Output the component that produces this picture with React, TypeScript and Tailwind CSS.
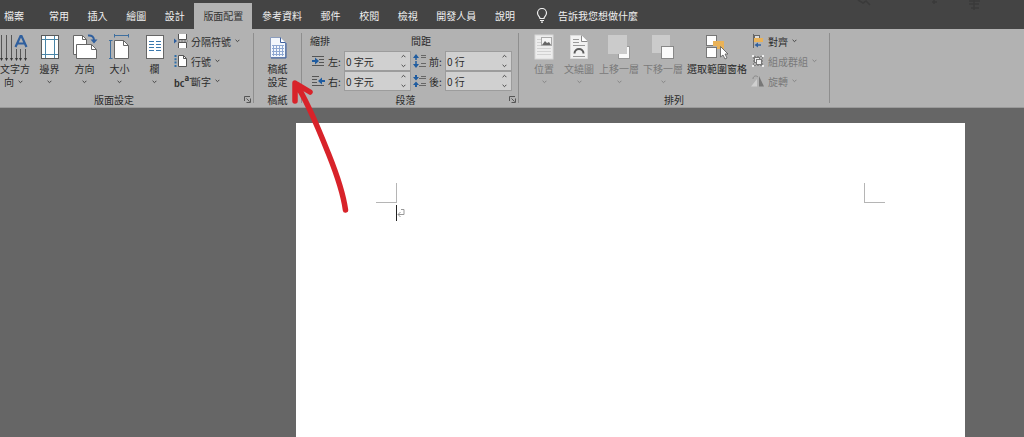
import type { ReactNode } from 'react';
import clsx from 'clsx';

const TABS = ['常用', '插入', '繪圖', '設計', '版面配置', '參考資料', '郵件', '校閱', '檢視', '開發人員', '說明'] as const;
const ACTIVE_TAB = '版面配置';

function Chevron({ className }: { className?: string }) {
  return (
    <svg className={clsx('shrink-0 opacity-80', className)} width="5" height="4" viewBox="0 0 5 4" fill="none" stroke="currentColor" aria-hidden="true">
      <path d="M0.6 0.8 2.5 2.7 4.4 0.8" />
    </svg>
  );
}

/* ---------- large icons ---------- */

function TextDirectionIcon() {
  return (
    <svg width="28" height="28" viewBox="0 0 28 28" aria-hidden="true">
      <g stroke="#555" fill="none">
        <path d="M1.500 1v25M6.500 1v25M11.500 1v25M16.500 15v11M20.500 15v11M25.500 15v11" />
      </g>
      <path d="M0 24h3l-1.500 3zM5 24h3l-1.500 3zM10 24h3l-1.500 3zM15 24h3l-1.500 3zM19 24h3l-1.500 3zM24 24h3l-1.500 3z" fill="#333" />
      <path d="M15.500 13 20.500 2h1l5 11M17.500 9.500h7" fill="none" stroke="#2f5f9e" strokeWidth="2.200" />
    </svg>
  );
}

function MarginsIcon() {
  return (
    <svg width="20" height="26" viewBox="0 0 20 26" aria-hidden="true">
      <rect x="1.500" y="1.500" width="17" height="23" fill="#fff" stroke="#5a5a5a" />
      <path d="M5.500 2v22M14.500 2v22M2 5.500h16M2 20.500h16" stroke="#4a86a8" fill="none" />
    </svg>
  );
}

function OrientationIcon() {
  return (
    <svg width="26" height="26" viewBox="0 0 26 26" aria-hidden="true">
      <path d="M1.500 1.500h9l4 4v15h-13z" fill="#fff" stroke="#666" />
      <path d="M10.500 1.500v4h4" fill="none" stroke="#666" />
      <path d="M4.500 10.500h15l5 5v9h-20z" fill="#fff" stroke="#666" />
      <path d="M19.500 10.500v5h5" fill="none" stroke="#666" />
      <path d="M16 1.500c4-.5 6 1.500 6 5" fill="none" stroke="#2f5f9e" strokeWidth="2" />
      <path d="M18.500 5.500h7L22 9.500z" fill="#2f5f9e" />
    </svg>
  );
}

function SizeIcon() {
  return (
    <svg width="22" height="26" viewBox="0 0 22 26" aria-hidden="true">
      <path d="M5.500 6.500h9l5 5v13h-14z" fill="#fff" stroke="#666" />
      <path d="M14.500 6.500v5h5" fill="none" stroke="#666" />
      <path d="M5 1.500h15M5.500 0v3.500M19.500 0v3.500M1.500 6v18M0 6.500h3.500M0 24.500h3.500" fill="none" stroke="#3f6f9f" />
    </svg>
  );
}

function ColumnsIcon() {
  return (
    <svg width="20" height="26" viewBox="0 0 20 26" aria-hidden="true">
      <rect x="1.500" y="1.500" width="17" height="23" fill="#fff" stroke="#666" />
      <path d="M4 7.500h5M4 10.500h5M4 13.500h5M4 16.500h5M11 7.500h5M11 10.500h5M11 13.500h5M11 16.500h5" stroke="#3a78ad" fill="none" />
    </svg>
  );
}

function ManuscriptIcon() {
  return (
    <svg width="18" height="24" viewBox="0 0 18 24" aria-hidden="true">
      <path d="M1.500 1.500h10l5 5v15h-15z" fill="#f3f7fc" stroke="#8c9dbd" />
      <path d="M11.500 1.500v5h5" fill="#fff" stroke="#3d5f9c" />
      <path d="M4.500 9v11M7.500 9v11M10.500 9v11M13.500 9v11M3 9.500h12M3 12.500h12M3 15.500h12M3 18.500h12" stroke="#8fa8d2" fill="none" />
      <path d="M2 22h15V7" fill="none" stroke="#3d5f9c" />
    </svg>
  );
}

function PositionIcon() {
  return (
    <svg width="20" height="26" viewBox="0 0 20 26" aria-hidden="true">
      <rect x="1" y="1" width="18" height="24" fill="#ededed" stroke="#d8d8d8" />
      <path d="M3 5.500h4M3 8.500h4M3 11.500h4M3 14.500h14M3 17.500h14M3 20.500h14" stroke="#d2d2d2" fill="none" />
      <rect x="7.500" y="3.500" width="10" height="8" fill="#f4f4f4" stroke="#aaa" />
      <path d="M8 11l3-4 2 2 2-1 2 3z" fill="#666" />
    </svg>
  );
}

function WrapTextIcon() {
  return (
    <svg width="20" height="26" viewBox="0 0 20 26" aria-hidden="true">
      <path d="M1.500 1.500h11l6 6v17h-17z" fill="#f2f2f2" stroke="#dcdcdc" />
      <path d="M12.500 1.500v6h6" fill="#fff" stroke="#8a8a8a" />
      <path d="M4 5.500h6M4 8.500h6M4 11.500h12M4 22.500h12" stroke="#9a9a9a" fill="none" />
      <path d="M5.500 19.500c0-6 9-6 9 0" fill="none" stroke="#5c5c5c" strokeWidth="2" />
    </svg>
  );
}

function BringForwardIcon() {
  return (
    <svg width="24" height="26" viewBox="0 0 24 26" aria-hidden="true">
      <rect x="11.500" y="12.500" width="11" height="12" fill="#fafafa" stroke="#999" />
      <rect x="1" y="1" width="19" height="19" fill="#cbcbcb" />
    </svg>
  );
}

function SendBackwardIcon() {
  return (
    <svg width="24" height="26" viewBox="0 0 24 26" aria-hidden="true">
      <rect x="1" y="1" width="18" height="18" fill="#cbcbcb" />
      <rect x="10.500" y="12.500" width="12" height="12" fill="#fafafa" stroke="#888" />
    </svg>
  );
}

function SelectionPaneIcon() {
  return (
    <svg width="24" height="26" viewBox="0 0 24 26" aria-hidden="true">
      <rect x="1.500" y="1.500" width="10" height="10" fill="#fff" stroke="#777" />
      <rect x="1.500" y="13.500" width="10" height="10" fill="#fff" stroke="#777" />
      <path d="M8 7h11v8h-7v-3H8z" fill="#e9b258" />
      <path d="M15.500 12.500v10.500l2.500-2 2 4 2-1-2-4h3z" fill="#fff" stroke="#555" strokeWidth="0.800" />
    </svg>
  );
}

/* ---------- small icons ---------- */

function BreaksIcon() {
  return (
    <svg width="14" height="14" viewBox="0 0 14 14" aria-hidden="true">
      <path d="M4.500 0v5.500h8V0M4.500 14V8.500h8V14" fill="#fff" stroke="#555" />
      <path d="M4 7h10" stroke="#777" strokeDasharray="2 1" />
      <path d="M0 4.500 3 7 0 9.500z" fill="#2f5f9e" />
    </svg>
  );
}

function LineNumbersIcon() {
  return (
    <svg width="14" height="14" viewBox="0 0 14 14" aria-hidden="true">
      <path d="M4.500 1.500h5l3 3v8h-8z" fill="#fff" stroke="#555" />
      <path d="M9.500 1.500v3h3" fill="none" stroke="#555" />
      <path d="M1.500 1v12" stroke="#2f6fa8" strokeWidth="2" strokeDasharray="2 1.300" />
    </svg>
  );
}

function HyphenationIcon() {
  return (
    <span className="flex h-3.5 items-start font-bold text-[#333]" aria-hidden="true">
      <span className="self-end text-[9px] leading-[9px]">bc</span>
      <span className="text-[8px] leading-[7px]">a-</span>
    </span>
  );
}

function AlignIcon() {
  return (
    <svg width="14" height="14" viewBox="0 0 14 14" aria-hidden="true">
      <path d="M2.500 0v14" stroke="#666" />
      <rect x="3.500" y="1.500" width="5" height="3" fill="#ddd" stroke="#666" />
      <rect x="3" y="4" width="9" height="4" fill="#e9b258" />
      <path d="M10 11H5" stroke="#2f5f9e" strokeWidth="1.500" />
      <path d="M7 8.500v5L3.500 11z" fill="#2f5f9e" />
    </svg>
  );
}

function GroupIcon() {
  return (
    <svg width="14" height="14" viewBox="0 0 14 14" aria-hidden="true">
      <path d="M2.500 3v8M11.500 3v8M3 2.500h8M3 11.500h8" stroke="#888" strokeDasharray="2 1" />
      <rect x="3.500" y="3.500" width="5" height="5" fill="#f2f2f2" stroke="#777" />
      <rect x="5.500" y="5.500" width="5" height="5" fill="#f2f2f2" stroke="#777" />
      <path d="M1 1h2v2H1zM11 1h2v2h-2zM1 11h2v2H1zM11 11h2v2h-2z" fill="#eee" />
    </svg>
  );
}

function RotateIcon() {
  return (
    <svg width="14" height="14" viewBox="0 0 14 14" aria-hidden="true">
      <path d="M0 12.500 6 5v7.500z" fill="#cfcfcf" />
      <path d="M8 2v10.500h5z" fill="#777" />
      <path d="M2 5c0-3 3-4 5-2" fill="none" stroke="#888" />
    </svg>
  );
}

function IndentIcon({ right = false }: { right?: boolean }) {
  return (
    <svg width="13" height="11" viewBox="0 0 13 11" aria-hidden="true">
      {right ? (
        <>
          <path d="M0 .5h7M0 3.500h5M0 6.500h5M0 9.500h12" stroke="#555" />
          <path d="M13 5H9" stroke="#1f5ca0" strokeWidth="2" />
          <path d="M10 1.500v7L6 5z" fill="#1f5ca0" />
        </>
      ) : (
        <>
          <path d="M0 .5h12M7 3.500h5M7 6.500h5M0 9.500h12" stroke="#555" />
          <path d="M0 5h4" stroke="#1f5ca0" strokeWidth="2" />
          <path d="M3 1.500v7L7 5z" fill="#1f5ca0" />
        </>
      )}
    </svg>
  );
}

function SpacingIcon({ after = false }: { after?: boolean }) {
  return (
    <svg width="14" height="14" viewBox="0 0 14 14" aria-hidden="true">
      {after ? (
        <>
          <path d="M0 3h2V1h2v2h2L3 6.500zM0 11h2v2h2v-2h2L3 7.500z" fill="#1f5ca0" />
          <path d="M8 2.500h5M6 4.500h7M8 9.500h5M6 11.500h7" stroke="#666" />
        </>
      ) : (
        <>
          <path d="M3 2v10" stroke="#1f5ca0" strokeWidth="1.500" strokeDasharray="4 1" />
          <path d="M0 4 3 0l3 4zM0 10l3 4 3-4z" fill="#1f5ca0" />
          <path d="M8 1.500h5M8 3.500h5M8 9.500h5M6 12.500h7" stroke="#666" />
        </>
      )}
    </svg>
  );
}

/* ---------- ribbon pieces ---------- */

interface BigButtonProps {
  icon: ReactNode;
  label: string;
  width: string;
  menu?: boolean;
  disabled?: boolean;
}

function BigButton({ icon, label, width, menu = true, disabled = false }: BigButtonProps) {
  return (
    <button
      type="button"
      disabled={disabled}
      className={clsx('flex shrink-0 flex-col items-center whitespace-nowrap pt-[5px]', width, disabled && 'text-[#7a7a7a]')}
    >
      <span className="flex h-7 items-start">{icon}</span>
      <span className="leading-[14px]">{label}</span>
      {menu && <Chevron className="mt-1" />}
    </button>
  );
}

function SmallButton({ icon, label, disabled = false }: { icon: ReactNode; label: string; disabled?: boolean }) {
  return (
    <button type="button" disabled={disabled} className={clsx('flex h-5 items-center whitespace-nowrap', disabled && 'text-[#7a7a7a]')}>
      <span className="w-[17px]">{icon}</span>
      {label}
      <Chevron className="ml-1" />
    </button>
  );
}

interface GroupProps {
  title: string;
  launcher?: boolean;
  className: string;
  titleClassName?: string;
  children: ReactNode;
}

function Group({ title, launcher = false, className, titleClassName, children }: GroupProps) {
  return (
    <section aria-label={title} className={clsx('my-1 flex shrink-0 flex-col border-r border-[#8e8e8e]', className)}>
      <div className="-mt-1 flex h-16 shrink-0">{children}</div>
      <div className="-mb-1 flex h-3.5 shrink-0 items-center pb-0.5">
        <span className={clsx('flex-1 text-center', titleClassName)}>{title}</span>
        {launcher && (
          <button type="button" aria-label={`${title}選項`} className="mr-0.5">
            <svg width="7" height="7" viewBox="0 0 7 7" fill="none" stroke="#555" aria-hidden="true">
              <path d="M.5 5V.5H6M2.500 2.500l3 3M6.500 2.500v4h-4" />
            </svg>
          </button>
        )}
      </div>
    </section>
  );
}

function SpinField({ id, icon, label, value }: { id: string; icon: ReactNode; label: string; value: string }) {
  return (
    <div className="flex h-5 items-center">
      <span className="flex w-[18px] justify-center pr-px">{icon}</span>
      <label htmlFor={id} className="w-4 whitespace-nowrap">{label}</label>
      <div className="flex h-5 w-[67px] items-center border border-[#9c9c9c] bg-[#d0d0d0]">
        <input id={id} defaultValue={value} className="w-full min-w-0 bg-transparent pl-px outline-none" />
        <span className="flex flex-col gap-1.5 pr-1">
          <button type="button" aria-label={`${label}增加`}><Chevron className="rotate-180" /></button>
          <button type="button" aria-label={`${label}減少`}><Chevron /></button>
        </span>
      </div>
    </div>
  );
}

function TabBar() {
  return (
    <header className="relative flex h-[29px] shrink-0 items-end overflow-hidden bg-[#444] text-[#f0f0f0]">
      <button type="button" className="h-[26px] w-10 pb-0.5 pr-3">檔案</button>
      <nav className="flex w-[484px] shrink-0 justify-between">
        {TABS.map(tab => (
          <button
            key={tab}
            type="button"
            className={clsx('h-[26px] whitespace-nowrap px-[9px] pb-0.5', tab === ACTIVE_TAB && 'bg-[#b2b2b2] text-[#333]')}
          >
            {tab}
          </button>
        ))}
      </nav>
      <button type="button" className="ml-3 flex h-[26px] items-center gap-2.5 whitespace-nowrap pb-0.5">
        <svg width="12" height="15" viewBox="0 0 12 15" fill="none" stroke="#eee" strokeWidth="1.200" aria-hidden="true">
          <path d="M4 10.500C4 8.500 1.500 8 1.500 5a4.500 4.500 0 0 1 9 0c0 3-2.500 3.500-2.500 5.500zM4 12.500h4M5 14.200h2" />
        </svg>
        告訴我您想做什麼
      </button>
      <svg className="absolute right-0 top-0" width="170" height="12" viewBox="0 0 170 12" fill="none" stroke="#3a3a3a" strokeWidth="1.500" aria-hidden="true">
        <path d="M4 0l5 3 3-2 4 4M80 0v4M78 2h5M115 1h11M115 4h10M117 8h8M120 0v10" />
      </svg>
    </header>
  );
}

function Ribbon() {
  return (
    <div className="flex h-[79px] shrink-0 overflow-hidden border-b border-[#9a9a9a] bg-[#b2b2b2] text-[#2b2b2b]">
      <Group title="版面設定" launcher className="w-[254px]" titleClassName="pr-4">
        <button type="button" className="flex w-8 shrink-0 flex-col items-start pt-[5px]">
          <span className="h-7"><TextDirectionIcon /></span>
          <span className="whitespace-nowrap leading-[14px]">文字方</span>
          <span className="ml-1 flex items-center gap-1 leading-3">向<Chevron /></span>
        </button>
        <BigButton icon={<MarginsIcon />} label="邊界" width="w-[35px]" />
        <BigButton icon={<OrientationIcon />} label="方向" width="w-[35px]" />
        <BigButton icon={<SizeIcon />} label="大小" width="w-[35px]" />
        <BigButton icon={<ColumnsIcon />} label="欄" width="w-[35px]" />
        <div className="ml-0.5 flex flex-col pt-0.5">
          <SmallButton icon={<BreaksIcon />} label="分隔符號" />
          <SmallButton icon={<LineNumbersIcon />} label="行號" />
          <SmallButton icon={<HyphenationIcon />} label="斷字" />
        </div>
      </Group>

      <Group title="稿紙" className="w-12">
        <button type="button" className="flex w-full flex-col items-center pt-[7px]">
          <span className="h-[26px]"><ManuscriptIcon /></span>
          <span className="w-5 leading-[13px]">稿紙設定</span>
        </button>
      </Group>

      <Group title="段落" launcher className="w-[217px]">
        <div className="flex pl-2 pt-0.5">
          <fieldset>
            <legend className="h-5 leading-5">縮排</legend>
            <SpinField id="indent-left" icon={<IndentIcon />} label="左:" value="0 字元" />
            <SpinField id="indent-right" icon={<IndentIcon right />} label="右:" value="0 字元" />
          </fieldset>
          <fieldset>
            <legend className="h-5 leading-5">間距</legend>
            <SpinField id="space-before" icon={<SpacingIcon />} label="前:" value="0 行" />
            <SpinField id="space-after" icon={<SpacingIcon after />} label="後:" value="0 行" />
          </fieldset>
        </div>
      </Group>

      <Group title="排列" className="w-[311px]">
        <div className="flex pl-2">
          <BigButton icon={<PositionIcon />} label="位置" width="w-[34px]" disabled />
          <BigButton icon={<WrapTextIcon />} label="文繞圖" width="w-9" disabled />
          <BigButton icon={<BringForwardIcon />} label="上移一層" width="w-11" disabled />
          <BigButton icon={<SendBackwardIcon />} label="下移一層" width="w-11" disabled />
          <BigButton icon={<SelectionPaneIcon />} label="選取範圍窗格" width="w-16" menu={false} />
        </div>
        <div className="ml-0.5 flex flex-col pt-0.5">
          <SmallButton icon={<AlignIcon />} label="對齊" />
          <SmallButton icon={<GroupIcon />} label="組成群組" disabled />
          <SmallButton icon={<RotateIcon />} label="旋轉" disabled />
        </div>
      </Group>
    </div>
  );
}

function DocumentPage() {
  return (
    <main className="flex flex-1 bg-[#666] pt-[15px]">
      <article className="ml-[296px] mr-[59px] flex-1 bg-white px-20 pt-[60px]">
        <div className="flex justify-between">
          <span className="h-5 w-[21px] border-b border-r border-[#b5b5b5]" />
          <span className="h-5 w-[21px] border-b border-l border-[#b5b5b5]" />
        </div>
        <div className="ml-5 mt-0.5 flex items-center">
          <span className="h-4 w-px bg-[#222]" />
          <svg width="8" height="8" viewBox="0 0 8 8" fill="none" stroke="#999" aria-hidden="true">
            <path d="M4 .5h3v5H1M3.500 3 1 5.500 3.500 8" />
          </svg>
        </div>
      </article>
    </main>
  );
}

export default function App() {
  return (
    <div className="relative flex min-h-screen flex-col overflow-hidden font-['Noto_Sans_CJK_TC',sans-serif] text-[10px]" lang="zh-Hant">
      <TabBar />
      <Ribbon />
      <DocumentPage />
      {/* hand-drawn arrow pointing at 稿紙設定 */}
      <svg className="pointer-events-none absolute left-[290px] top-[78px]" width="60" height="140" viewBox="0 0 60 140" fill="none" stroke="#d8232a" strokeWidth="5.500" strokeLinecap="round" strokeLinejoin="round" aria-hidden="true">
        <path d="M55.500 132C53 114 45 92 39 77 31 57 18 24 6 6M5 23 5 5 20 14" />
      </svg>
    </div>
  );
}
